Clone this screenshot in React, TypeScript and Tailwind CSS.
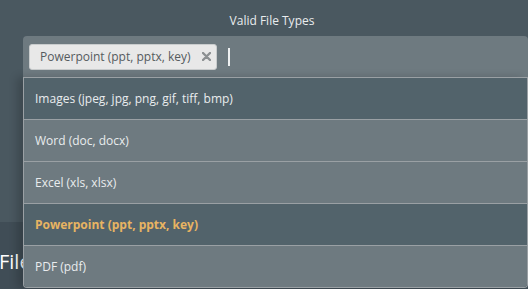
import React from 'react';

const options = [
  { label: 'Images (jpeg, jpg, png, gif, tiff, bmp)', active: true },
  { label: 'Word (doc, docx)' },
  { label: 'Excel (xls, xlsx)' },
  { label: 'Powerpoint (ppt, pptx, key)', active: true, selected: true },
  { label: 'PDF (pdf)' },
];

export default function App() {
  return (
    <div
      className="relative h-[289px] w-[528px] overflow-hidden bg-[#4a5860] text-[#e9ecee]"
      style={{ fontFamily: '"Open Sans", sans-serif' }}
    >
      <div className="pt-[12px] text-center text-[12px] leading-[18px] pl-[16px]">Valid File Types</div>

      <div className="relative mt-[6px] ml-[23px]">
        <div className="flex h-[41px] items-center gap-[11px] rounded-t-[4px] bg-[#6e7a80] px-[6px]">
          <div className="flex h-[26px] items-center gap-[11px] rounded-[3px] border border-[#c9cccd] bg-[#e8e8e8] pl-[10px] pr-[5px] text-[12px] text-[#555b5e]">
            Powerpoint (ppt, pptx, key)
            <svg width="9" height="9" viewBox="0 0 9 9" className="text-[#8c9092]">
              <path d="M1 1L8 8M8 1L1 8" stroke="currentColor" strokeWidth="2.4" strokeLinecap="round" />
            </svg>
          </div>
          <div className="h-[18px] w-[2px] bg-[#eef0f1]" />
        </div>

        <ul className="absolute left-0 top-[41px] z-10 w-[505px] overflow-hidden rounded-b-[4px] border-x border-b border-[#9aa0a4] shadow-[-6px_0_8px_rgba(0,0,0,0.18)]">
          {options.map((o, i) => (
            <li
              key={i}
              className={`flex h-[42px] items-center border-t border-[#9aa0a4] px-[11px] text-[12px] ${
                o.active ? 'bg-[#52636b]' : 'bg-[#6e7a80]'
              } ${o.selected ? 'font-bold text-[#e8b462]' : ''}`}
            >
              {o.label}
            </li>
          ))}
        </ul>
      </div>

      <div className="absolute left-0 right-0 top-[222px] h-[67px] bg-[#404d56] pt-[27px]">
        <h2 className="-ml-[1px] text-[20px] font-medium leading-[26px] text-white">Files</h2>
      </div>
    </div>
  );
}
